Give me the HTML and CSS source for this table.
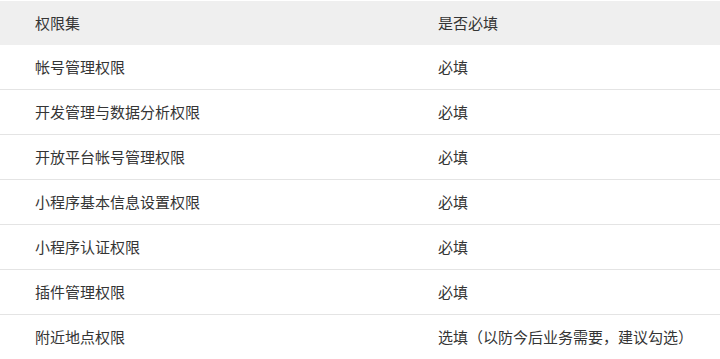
FILE: index.html
```html
<!DOCTYPE html>
<html lang="zh-CN">
<head>
<meta charset="utf-8">
<title>权限集</title>
<link rel="stylesheet" href="styles.css">
</head>
<body>
<table class="perm-table">
  <thead>
    <tr><th class="col-name">权限集</th><th>是否必填</th></tr>
  </thead>
  <tbody>
    <tr><td class="col-name">帐号管理权限</td><td>必填</td></tr>
    <tr><td class="col-name">开发管理与数据分析权限</td><td>必填</td></tr>
    <tr><td class="col-name">开放平台帐号管理权限</td><td>必填</td></tr>
    <tr><td class="col-name">小程序基本信息设置权限</td><td>必填</td></tr>
    <tr><td class="col-name">小程序认证权限</td><td>必填</td></tr>
    <tr><td class="col-name">插件管理权限</td><td>必填</td></tr>
    <tr><td class="col-name">附近地点权限</td><td>选填（以防今后业务需要，建议勾选）</td></tr>
  </tbody>
</table>
</body>
</html>
```
FILE: styles.css
```css
html, body {
  margin: 0;
  padding: 0;
  background: #ffffff;
}
body {
  padding-top: 1px;
  font-family: "Noto Sans CJK SC", "Noto Sans", sans-serif;
  font-size: 15px;
  color: #353535;
}
.perm-table {
  width: 720px;
  border-collapse: collapse;
  table-layout: fixed;
}
.perm-table th,
.perm-table td {
  text-align: left;
  font-weight: normal;
  padding: 0 0 0 35px;
  white-space: nowrap;
  line-height: 20px;
}
.perm-table th {
  height: 44px;
  background: #efefef;
}
.perm-table td {
  height: 44px;
  border-bottom: 1px solid #e4e4e4;
}
.perm-table .col-name {
  width: 368px;
}
```
